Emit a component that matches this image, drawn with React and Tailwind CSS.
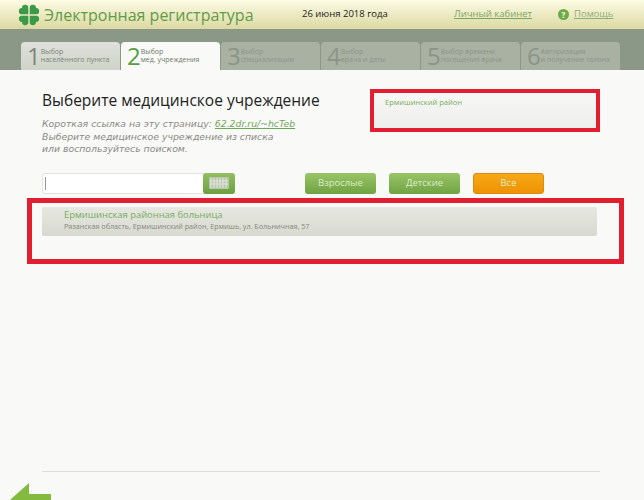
const F = "font-['Open_Sans','Noto_Sans',sans-serif]";

function Clover() {
  const leaf = "M12.700 11.300V5A3.150 3.150 0 0 1 19 5A3.150 3.150 0 0 1 19 11.300Z";
  return (
    <svg width="24" height="24" viewBox="0 0 24 24" className="shrink-0">
      <g fill="#3a9a48">
        <path d={leaf} />
        <path d={leaf} transform="rotate(90 12 12)" />
        <path d={leaf} transform="rotate(180 12 12)" />
        <path d={leaf} transform="rotate(270 12 12)" />
      </g>
    </svg>
  );
}

function Keyboard() {
  return (
    <svg width="20" height="12" viewBox="0 0 20 12">
      <rect width="20" height="12" rx="1" fill="#b9c6ad" />
      <path d="M2 1v10M5 1v10M8 1v10M11 1v10M14 1v10M17 1v10M1 4h18M1 7h18" stroke="#e3e6dc" strokeWidth="1" />
    </svg>
  );
}

const tabs = [
  ["1", "Выбор", "населённого пункта", "done"],
  ["2", "Выбор", "мед. учреждения", "active"],
  ["3", "Выбор", "специализации", "off"],
  ["4", "Выбор", "врача и даты", "off"],
  ["5", "Выбор времени", "посещения врача", "off"],
  ["6", "Авторизация", "и получение талона", "off"],
];

function Tab({ n, a, b, state }) {
  const bg =
    state === "active"
      ? "bg-[#f9f9f7]"
      : state === "done"
      ? "bg-gradient-to-b from-[#dfe1da] to-[#cfd3c9]"
      : "bg-[#a9b1a3]";
  const num =
    state === "active" ? "text-[#55a045]" : state === "done" ? "text-[#7d8679]" : "text-[#8b9488]";
  const txt =
    state === "active" ? "text-[#6d7a68]" : state === "done" ? "text-[#7a8477]" : "text-[#8b9488]";
  return (
    <div className={`w-[99px] h-[28px] rounded-t-[4px] flex items-center pl-[6px] ${bg}`}>
      <span className={`text-[24px] leading-none ${num}`}>{n}</span>
      <div className={`text-[7px] leading-[8px] whitespace-nowrap ${txt}`}>
        <div>{a}</div>
        <div>{b}</div>
      </div>
    </div>
  );
}

function Btn({ children, orange, className }) {
  return (
    <div
      className={`h-[21px] rounded-[3px] flex items-center justify-center text-[9.5px] text-[#dcebcb] ${
        orange
          ? "bg-gradient-to-b from-[#f7a816] to-[#ee9200] border border-[#d98a10]"
          : "bg-gradient-to-b from-[#9ac567] to-[#6fa342]"
      } ${className}`}
    >
      {children}
    </div>
  );
}

export default function App() {
  return (
    <div className={`relative w-[644px] h-[500px] overflow-hidden bg-[#f9f9f7] ${F}`}>
      <header className="h-[29px] bg-gradient-to-b from-[#fdfbe4] to-[#dcd9a2] flex items-center pl-[17px]">
        <Clover />
        <span className="ml-[3px] text-[16px] font-medium text-[#5f9c4a] whitespace-nowrap w-[258px]">
          Электронная регистратура
        </span>
        <span className="text-[9.5px] text-[#222] whitespace-nowrap w-[152px]">26 июня 2018 года</span>
        <span className="text-[9.5px] text-[#7aa768] underline whitespace-nowrap w-[104px]">Личный кабинет</span>
        <span className="w-[11px] h-[11px] rounded-full bg-[#6dab43] text-white text-[8px] leading-[11px] text-center font-bold">?</span>
        <span className="ml-[5px] text-[9.5px] text-[#8fae7f] underline">Помощь</span>
      </header>

      <nav className="h-[41px] bg-[#8b9787] flex items-end pl-[21px] gap-px">
        {tabs.map((t) => (
          <Tab key={t[0]} n={t[0]} a={t[1]} b={t[2]} state={t[3]} />
        ))}
      </nav>

      <main className="pl-[42px] pr-[47px]">
        <div className="flex h-[100px]">
          <div className="w-[328px] pt-[20px]">
            <h1 className="text-[15.5px] leading-[20px] text-[#222] whitespace-nowrap">
              Выберите медицинское учреждение
            </h1>
            <div className="mt-[8px] text-[9.3px] leading-[12.5px] italic text-[#8a8a86] font-['DejaVu_Sans',sans-serif]">
              <div className="whitespace-nowrap">
                Короткая ссылка на эту страницу:{" "}
                <span className="text-[#6fa65a] underline">62.2dr.ru/~hcTeb</span>
              </div>
              <div className="whitespace-nowrap">Выберите медицинское учреждение из списка</div>
              <div>или воспользуйтесь поиском.</div>
            </div>
          </div>
        </div>

        <div className="flex items-center h-[22px] mt-[2px]">
          <div className="w-[193px] h-[21px] flex rounded-[3px] bg-white border border-[#e4e4e0] items-center">
            <span className="ml-[2px] w-px h-[13px] bg-[#999]" />
            <div className="ml-auto w-[32px] h-[21px] -mr-px rounded-[3px] bg-gradient-to-b from-[#94bf62] to-[#6b9f3f] flex items-center justify-center">
              <Keyboard />
            </div>
          </div>
          <Btn className="w-[71px] ml-[70px]">Взрослые</Btn>
          <Btn className="w-[71px] ml-[13px]">Детские</Btn>
          <Btn orange className="w-[71px] ml-[13px]">Все</Btn>
        </div>

        <div className="mt-[13px] h-[29px] bg-gradient-to-b from-[#e6e7e0] to-[#d8dad0] rounded-[2px] pl-[22px] pt-[1px]">
          <div className="text-[9.4px] leading-[13px] text-[#78ad62]">Ермишинская районная больница</div>
          <div className="text-[7.2px] leading-[10px] text-[#85877d] whitespace-nowrap">
            Рязанская область, Ермишинский район, Ермишь, ул. Больничная, 57
          </div>
        </div>

        <div className="mt-[235px] mr-[-3px] h-px bg-[#dededa]" />
      </main>

      <div className="absolute left-[370px] top-[89px] w-[230px] h-[43px] border-[4px] border-[#e21f30] bg-gradient-to-b from-[#f7f7f5] to-[#eeeeec] pl-[11px] pt-[4px] text-[7.5px] leading-[10px] text-[#78ad62]">
        Ермишинский район
      </div>
      <div className="absolute left-[27px] top-[198px] w-[597px] h-[66px] border-[5px] border-[#e21f30]" />

      <svg className="absolute left-[10px] top-[483px]" width="42" height="17" viewBox="0 0 42 17">
        <path d="M19 0V11H41V17H0Z" fill="#84bb3f" />
      </svg>
    </div>
  );
}
